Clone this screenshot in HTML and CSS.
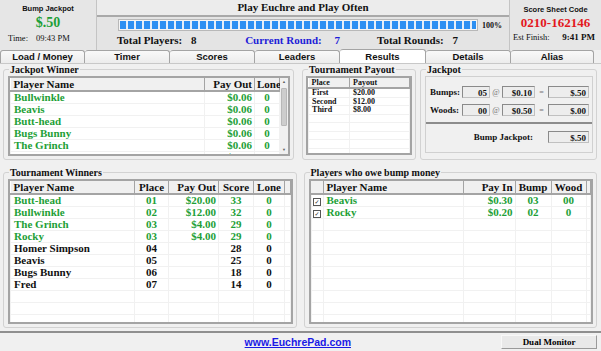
FILE: index.html
```html
<!DOCTYPE html>
<html lang="en">
  <head>
    <meta charset="UTF-8" />
    <title>EuchrePad Results</title>
    <link rel="stylesheet" href="styles.css">
  </head>
  <body>
    <div class="header">
      <div class="side-box">
        <div class="box-label">Bump Jackpot</div>
        <div class="big-value green">$.50</div>
        <div class="box-foot">
          <span class="foot-label">Time:</span>
          <span class="foot-time">09:43 PM</span>
        </div>
      </div>

      <div class="header-mid">
        <div class="title">Play Euchre and Play Often</div>
        <div class="progress-row">
          <div class="progress"><div class="progress-fill"></div></div>
          <span class="progress-pct">100%</span>
        </div>
        <div class="totals">
          <div class="total">Total Players: <span class="num">8</span></div>
          <div class="total blue">Current Round: <span class="num wide">7</span></div>
          <div class="total">Total Rounds: <span class="num">7</span></div>
        </div>
      </div>

      <div class="side-box right">
        <div class="box-label">Score Sheet Code</div>
        <div class="big-value red">0210-162146</div>
        <div class="box-foot">
          <span class="foot-label">Est Finish:</span>
          <span class="foot-bold">9:41 PM</span>
        </div>
      </div>
    </div>

    <div class="tabs">
      <div class="tab">Load / Money</div>
      <div class="tab">Timer</div>
      <div class="tab">Scores</div>
      <div class="tab">Leaders</div>
      <div class="tab active">Results</div>
      <div class="tab">Details</div>
      <div class="tab last">Alias</div>
    </div>

    <div class="content">
      <div class="row top-row">
        <fieldset class="group jackpot-winner">
          <legend>Jackpot Winner</legend>
          <div class="grid scroll-grid">
            <div class="grid-body">
              <table>
                <colgroup><col style="width:194px"><col style="width:50px"><col></colgroup>
                <tr class="head"><th class="l">Player Name</th><th class="r">Pay Out</th><th>Lone</th></tr>
                <tr class="green"><td class="l">Bullwinkle</td><td class="r">$0.06</td><td>0</td></tr>
                <tr class="green"><td class="l">Beavis</td><td class="r">$0.06</td><td>0</td></tr>
                <tr class="green"><td class="l">Butt-head</td><td class="r">$0.06</td><td>0</td></tr>
                <tr class="green"><td class="l">Bugs Bunny</td><td class="r">$0.06</td><td>0</td></tr>
                <tr class="green"><td class="l">The Grinch</td><td class="r">$0.06</td><td>0</td></tr>
                <tr class="green"><td class="l">Homer Simpson</td><td class="r">$0.06</td><td>0</td></tr>
              </table>
            </div>
            <div class="scrollbar">
              <span class="arrow">&#9650;</span>
              <div class="track"><div class="thumb"></div></div>
              <span class="arrow">&#9660;</span>
            </div>
          </div>
        </fieldset>

        <fieldset class="group payout">
          <legend>Tournament Payout</legend>
          <div class="grid small-grid">
            <table>
              <colgroup><col style="width:41px"><col></colgroup>
              <tr class="head"><th class="l">Place</th><th class="l">Payout</th></tr>
              <tr><td class="l">First</td><td class="l">$20.00</td></tr>
              <tr><td class="l">Second</td><td class="l">$12.00</td></tr>
              <tr><td class="l">Third</td><td class="l">$8.00</td></tr>
              <tr><td></td><td></td></tr>
              <tr><td></td><td></td></tr>
              <tr><td></td><td></td></tr>
              <tr><td></td><td></td></tr>
              <tr><td></td><td></td></tr>
            </table>
          </div>
        </fieldset>

        <fieldset class="group jackpot">
          <legend>Jackpot</legend>
          <div class="jackpot-inner">
            <div class="calc-row">
              <span class="calc-label">Bumps:</span>
              <span class="field count">05</span><span class="op">@</span>
              <span class="field rate">$0.10</span><span class="op eq">=</span>
              <span class="field total-field">$.50</span>
            </div>
            <div class="calc-row">
              <span class="calc-label">Woods:</span>
              <span class="field count">00</span><span class="op">@</span>
              <span class="field rate">$0.50</span><span class="op eq">=</span>
              <span class="field total-field">$.00</span>
            </div>
            <div class="calc-row sum">
              <span class="sum-label">Bump Jackpot:</span>
              <span class="field total-field">$.50</span>
            </div>
          </div>
        </fieldset>
      </div>

      <div class="row bottom-row">
        <fieldset class="group winners">
          <legend>Tournament Winners</legend>
          <div class="grid tall-grid">
            <table>
              <colgroup><col style="width:124px"><col style="width:34px"><col style="width:50px"><col style="width:35px"><col style="width:31px"><col></colgroup>
              <tr class="head"><th class="l">Player Name</th><th>Place</th><th class="r">Pay Out</th><th>Score</th><th>Lone</th><th></th></tr>
              <tr class="green"><td class="l">Butt-head</td><td>01</td><td class="r">$20.00</td><td>33</td><td>0</td><td></td></tr>
              <tr class="green"><td class="l">Bullwinkle</td><td>02</td><td class="r">$12.00</td><td>32</td><td>0</td><td></td></tr>
              <tr class="green"><td class="l">The Grinch</td><td>03</td><td class="r">$4.00</td><td>29</td><td>0</td><td></td></tr>
              <tr class="green"><td class="l">Rocky</td><td>03</td><td class="r">$4.00</td><td>29</td><td>0</td><td></td></tr>
              <tr><td class="l">Homer Simpson</td><td>04</td><td></td><td>28</td><td>0</td><td></td></tr>
              <tr><td class="l">Beavis</td><td>05</td><td></td><td>25</td><td>0</td><td></td></tr>
              <tr><td class="l">Bugs Bunny</td><td>06</td><td></td><td>18</td><td>0</td><td></td></tr>
              <tr><td class="l">Fred</td><td>07</td><td></td><td>14</td><td>0</td><td></td></tr>
              <tr><td></td><td></td><td></td><td></td><td></td><td></td></tr>
              <tr><td></td><td></td><td></td><td></td><td></td><td></td></tr>
              <tr><td></td><td></td><td></td><td></td><td></td><td></td></tr>
            </table>
          </div>
        </fieldset>

        <fieldset class="group owe">
          <legend>Players who owe bump money</legend>
          <div class="grid tall-grid">
            <table>
              <colgroup><col style="width:12px"><col style="width:140px"><col style="width:52px"><col style="width:36px"><col style="width:35px"><col></colgroup>
              <tr class="head"><th></th><th class="l">Player Name</th><th class="r">Pay In</th><th>Bump</th><th>Wood</th><th></th></tr>
              <tr class="green"><td class="check-cell"><span class="check">&#10003;</span></td><td class="l">Beavis</td><td class="r">$0.30</td><td>03</td><td>00</td><td></td></tr>
              <tr class="green"><td class="check-cell"><span class="check">&#10003;</span></td><td class="l">Rocky</td><td class="r">$0.20</td><td>02</td><td>0</td><td></td></tr>
              <tr><td></td><td></td><td></td><td></td><td></td><td></td></tr>
              <tr><td></td><td></td><td></td><td></td><td></td><td></td></tr>
              <tr><td></td><td></td><td></td><td></td><td></td><td></td></tr>
              <tr><td></td><td></td><td></td><td></td><td></td><td></td></tr>
              <tr><td></td><td></td><td></td><td></td><td></td><td></td></tr>
              <tr><td></td><td></td><td></td><td></td><td></td><td></td></tr>
              <tr><td></td><td></td><td></td><td></td><td></td><td></td></tr>
              <tr><td></td><td></td><td></td><td></td><td></td><td></td></tr>
              <tr><td></td><td></td><td></td><td></td><td></td><td></td></tr>
            </table>
          </div>
        </fieldset>
      </div>
    </div>

    <div class="footer">
      <a class="site-link" href="#">www.EuchrePad.com</a>
      <button class="monitor-btn">Dual Monitor</button>
    </div>
  </body>
</html>
```

FILE: styles.css
```css
body {
  margin: 0;
  width: 601px;
  height: 351px;
  overflow: hidden;
  background: #f0f0f0;
  font-family: "Liberation Serif", serif;
  color: #111;
}
.green {
  color: #1e9f37;
}
.red {
  color: #e3181c;
}
.blue {
  color: #1d1dd8;
}

/* header */
.header {
  display: flex;
  height: 50px;
  background: #e4e4e4;
}
.side-box {
  flex-shrink: 0;
  width: 97px;
  box-sizing: border-box;
  padding-top: 4px;
  background: #e6e6e6;
  border-right: 1px solid #c4c4c4;
}
.side-box.right {
  width: 92px;
  padding-top: 5px;
  border-right: none;
  border-left: 1px solid #c4c4c4;
}
.box-label {
  font: bold 7.5px "Liberation Sans", sans-serif;
  text-align: center;
  line-height: 10px;
}
.big-value {
  font-weight: bold;
  font-size: 14px;
  line-height: 17px;
  text-align: center;
}
.side-box.right .big-value {
  font-size: 13px;
  line-height: 15px;
}
.box-foot {
  display: flex;
  white-space: nowrap;
  font-size: 8.5px;
  line-height: 12px;
  padding: 1px 7px 0 8px;
}
.foot-label {
  width: 28px;
}
.side-box.right .box-foot {
  padding: 1px 6px 0 3px;
}
.side-box.right .foot-label {
  width: auto;
  flex: 1;
}
.foot-bold {
  font-weight: bold;
  font-size: 9px;
}
.header-mid {
  flex: 1;
  min-width: 0;
  background: #e4e4e4;
}
.title {
  height: 15px;
  line-height: 15px;
  text-align: center;
  font-weight: bold;
  font-size: 11px;
  background: #ececec;
  border-bottom: 2px solid #a9a9a9;
}
.progress-row {
  display: flex;
  align-items: center;
  padding: 3px 0 0 21px;
  height: 10px;
}
.progress {
  width: 356px;
  height: 8px;
  padding: 1px;
  border: 1px solid #b8b8b8;
  background: #f4f4f4;
}
.progress-fill {
  height: 100%;
  background: repeating-linear-gradient(90deg, #2c8ff2 0 6px, #e4eefa 6px 8px);
}
.progress-pct {
  font-weight: bold;
  font-size: 8px;
  margin-left: 4px;
}
.totals {
  display: flex;
  white-space: nowrap;
  padding: 3px 0 0 20px;
  font-weight: bold;
  font-size: 11px;
  line-height: 14px;
}
.total {
  width: 136px;
}
.total + .total {
  width: 140px;
}
.num {
  margin-left: 6px;
}
.num.wide {
  margin-left: 10px;
}

/* tabs */
.tabs {
  display: flex;
  height: 13px;
  font: bold 9.5px "Liberation Sans", sans-serif;
}
.tab {
  width: 85px;
  box-sizing: border-box;
  text-align: center;
  line-height: 12px;
  border: 1px solid #a4a4a4;
  border-bottom: none;
  border-left: none;
  border-radius: 3px 3px 0 0;
  background: linear-gradient(#f9f9f9, #ececec);
}
.tab:first-child {
  border-left: 1px solid #a4a4a4;
}
.tab.active {
  width: 86px;
  background: #fff;
  height: 14px;
  margin-top: -1px;
  line-height: 14px;
}
.tab.last {
  width: 83px;
}

/* content */
.content {
  height: 268px;
  box-sizing: border-box;
  padding: 0 4px 0 3px;
  border-top: 1px solid #c8c8c8;
}
.row {
  display: flex;
}
.top-row {
  height: 97px;
}
.bottom-row {
  margin-top: 6px;
  gap: 7px;
}
.group {
  margin: 0;
  padding: 0 3px 2px 4px;
  border: 1px solid #d2d2d2;
  border-radius: 3px;
  box-sizing: border-box;
}
.group legend {
  font-weight: bold;
  font-size: 10px;
  line-height: 11px;
  padding: 0 1px;
  margin-left: 1px;
}
.jackpot-winner {
  width: 294px;
  height: 96px;
}
.payout {
  width: 115px;
  height: 96px;
  margin-left: 8px;
}
.jackpot {
  width: 175px;
  height: 96px;
  margin-left: 4px;
}
.winners,
.owe {
  width: 294px;
  height: 161px;
}

/* grids */
.grid {
  margin-top: 1px;
  border: 2px solid #a4a4a4;
  background: #fff;
  overflow: hidden;
}
.grid table {
  width: 100%;
  table-layout: fixed;
  border-collapse: collapse;
  font-weight: bold;
  font-size: 11px;
}
.grid th {
  height: 12px;
  line-height: 12px;
  padding: 0 2px;
  background: #f0f0f0;
  border-right: 1px solid #a4a4a4;
  border-bottom: 2px solid #a4a4a4;
  text-align: center;
}
.grid td {
  height: 11px;
  line-height: 11px;
  padding: 0 2px;
  border: 1px solid #f1f1f1;
  text-align: center;
  white-space: nowrap;
  overflow: hidden;
}
.grid .l {
  text-align: left;
  padding-left: 3px;
}
.grid .r {
  text-align: right;
}
.scroll-grid {
  display: flex;
  height: 76px;
}
.grid-body {
  flex: 1;
  overflow: hidden;
}
.scrollbar {
  width: 8px;
  display: flex;
  flex-direction: column;
  align-items: center;
  background: #f0f0f0;
  font-size: 4px;
  line-height: 8px;
  color: #606060;
}
.track {
  flex: 1;
  width: 100%;
}
.thumb {
  margin: 2px 1px 0;
  height: 36px;
  background: #cdcdcd;
  border: 1px solid #b8b8b8;
  border-radius: 1px;
}
.small-grid {
  height: 75px;
  margin-left: -1px;
}
.small-grid table {
  font-size: 8px;
}
.small-grid th {
  height: 9px;
  line-height: 9px;
}
.small-grid td {
  height: 7.5px;
  line-height: 7.5px;
}
.tall-grid {
  height: 141px;
}
.check-cell {
  padding: 0 !important;
  vertical-align: top;
}
.check {
  display: inline-block;
  width: 6px;
  height: 6px;
  border: 1px solid #555;
  background: #fff;
  color: #222;
  font-size: 6px;
  line-height: 6px;
  text-align: center;
  font-family: "DejaVu Sans", sans-serif;
}

/* jackpot calculator */
.jackpot-inner {
  margin-top: 1px;
  height: 77px;
  box-sizing: border-box;
  border: 1px solid #d0d0d0;
  padding: 6px 3px 0 4px;
  font-weight: bold;
  font-size: 9px;
}
.calc-row {
  display: flex;
  align-items: center;
  height: 18px;
}
.calc-row.sum {
  margin-top: 3px;
  padding-top: 2px;
  height: 22px;
  border-top: 2px solid #8c8c8c;
  margin-left: -4px;
  margin-right: -3px;
  padding-left: 4px;
  padding-right: 3px;
}
.calc-label {
  width: 32px;
}
.sum-label {
  flex: 1;
  text-align: right;
  padding-right: 15px;
}
.field {
  height: 12px;
  line-height: 12px;
  box-sizing: border-box;
  border: 1px solid #c0c0c0;
  border-top-color: #8a8a8a;
  border-left-color: #8a8a8a;
  background: #ededed;
  text-align: right;
  padding-right: 2px;
}
.field.count {
  width: 28px;
}
.field.rate {
  width: 33px;
}
.field.total-field {
  width: 41px;
}
.op {
  width: 12px;
  text-align: center;
  color: #777;
  font-weight: normal;
  font-size: 8px;
}
.op.eq {
  width: 13px;
}

/* footer */
.footer {
  height: 17px;
  border-top: 2px solid #8f8f8f;
  display: flex;
  align-items: center;
  justify-content: flex-end;
  padding-right: 4px;
}
.site-link {
  font: bold 10.5px "Liberation Sans", sans-serif;
  color: #1a1ae6;
  margin-right: 150px;
}
.monitor-btn {
  width: 96px;
  height: 14px;
  padding: 0;
  font-family: "Liberation Serif", serif;
  font-weight: bold;
  font-size: 9px;
  background: #e9e9e9;
  border: 1px solid #9a9a9a;
  border-top-color: #f8f8f8;
  border-left-color: #f8f8f8;
}
```
